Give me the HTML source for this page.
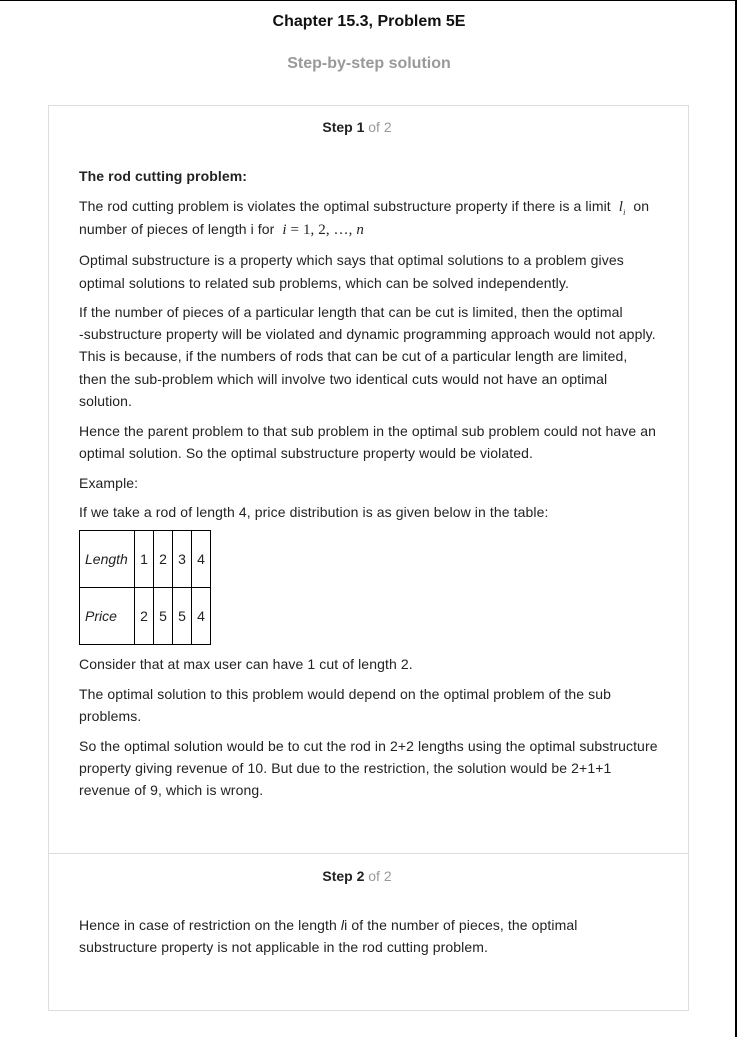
<!DOCTYPE html>
<html><head><meta charset="utf-8"><style>
body{margin:0;width:738px;height:1037px;background:#fff;position:relative;overflow:hidden;font-family:"Liberation Sans",Arial,sans-serif;color:#222;}
.l{position:absolute;left:79px;font-size:14px;line-height:16px;white-space:nowrap;letter-spacing:0.1px;}
.c{position:absolute;left:0;width:738px;text-align:center;white-space:nowrap;}
.s{position:absolute;left:0;width:714px;text-align:center;white-space:nowrap;font-size:14px;}
.m{font-family:"Liberation Serif",serif;font-style:italic;font-size:15px;}
table{position:absolute;left:79px;top:530px;border-collapse:collapse;font-size:14px;}
td{border:1px solid #000;padding:0;width:18px;height:56px;text-align:center;}
td:first-child{font-style:italic;text-align:left;padding:0 0 0 5px;width:49px;}
</style></head><body>
<div style="position:absolute;left:0;top:0;width:736px;height:1px;background:#000"></div>
<div style="position:absolute;left:735px;top:0;width:2px;height:1037px;background:#000"></div>
<div class="c" style="top:13px;font-size:16px;font-weight:bold;color:#111">Chapter 15.3, Problem 5E</div>
<div class="c" style="top:55px;font-size:16px;font-weight:bold;color:#999">Step-by-step solution</div>
<div style="position:absolute;left:48px;top:105px;width:639px;height:904px;border:1px solid #ddd"></div>
<div style="position:absolute;left:49px;top:853px;width:639px;height:1px;background:#ddd"></div>
<div class="s" style="top:119px"><b>Step 1</b> <span style="color:#999">of 2</span></div>
<div class="l" style="top:168px;font-weight:bold">The rod cutting problem:</div>
<div class="l" style="top:198px">The rod cutting problem is violates the optimal substructure property if there is a limit &nbsp;<span class="m">l<sub style="font-size:8px">i</sub></span>&nbsp; on</div>
<div class="l" style="top:221px">number of pieces of length i for &nbsp;<span class="m">i</span><span style="font-family:'Liberation Serif',serif;font-size:15px"> = 1, 2, …, </span><span class="m">n</span></div>
<div class="l" style="top:252px">Optimal substructure is a property which says that optimal solutions to a problem gives</div>
<div class="l" style="top:275px">optimal solutions to related sub problems, which can be solved independently.</div>
<div class="l" style="top:304px">If the number of pieces of a particular length that can be cut is limited, then the optimal</div>
<div class="l" style="top:326px">-substructure property will be violated and dynamic programming approach would not apply.</div>
<div class="l" style="top:348px">This is because, if the numbers of rods that can be cut of a particular length are limited,</div>
<div class="l" style="top:371px">then the sub-problem which will involve two identical cuts would not have an optimal</div>
<div class="l" style="top:393px">solution.</div>
<div class="l" style="top:423px">Hence the parent problem to that sub problem in the optimal sub problem could not have an</div>
<div class="l" style="top:445px">optimal solution. So the optimal substructure property would be violated.</div>
<div class="l" style="top:475px">Example:</div>
<div class="l" style="top:504px">If we take a rod of length 4, price distribution is as given below in the table:</div>
<table><tr><td>Length</td><td>1</td><td>2</td><td>3</td><td>4</td></tr><tr><td>Price</td><td>2</td><td>5</td><td>5</td><td>4</td></tr></table>
<div class="l" style="top:656px">Consider that at max user can have 1 cut of length 2.</div>
<div class="l" style="top:686px">The optimal solution to this problem would depend on the optimal problem of the sub</div>
<div class="l" style="top:708px">problems.</div>
<div class="l" style="top:738px">So the optimal solution would be to cut the rod in 2+2 lengths using the optimal substructure</div>
<div class="l" style="top:760px">property giving revenue of 10. But due to the restriction, the solution would be 2+1+1</div>
<div class="l" style="top:782px">revenue of 9, which is wrong.</div>
<div class="s" style="top:868px"><b>Step 2</b> <span style="color:#999">of 2</span></div>
<div class="l" style="top:917px">Hence in case of restriction on the length <i>l</i>i of the number of pieces, the optimal</div>
<div class="l" style="top:939px">substructure property is not applicable in the rod cutting problem.</div>
</body></html>
